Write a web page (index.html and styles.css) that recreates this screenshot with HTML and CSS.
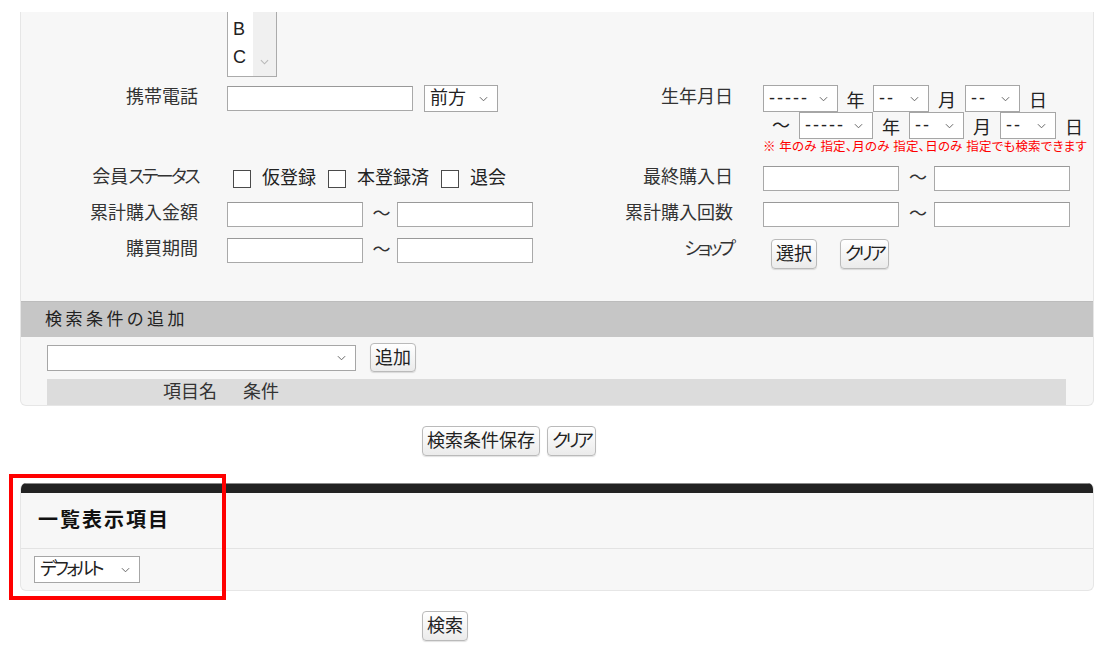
FILE: index.html
```html
<!DOCTYPE html>
<html lang="ja">
<head>
<meta charset="utf-8">
<title>検索</title>
<link rel="stylesheet" href="styles.css">
</head>
<body>
<div class="page">
  <section class="panel search">
    <div class="form">
      <div class="lbl r1"></div>
      <div class="val r1">
        <div class="listbox">
          <div class="opts"><div>B</div><div>C</div></div>
          <div class="sb"><svg viewBox="0 0 10 6" width="9" height="6"><path d="M1 1l4 4 4-4" fill="none" stroke="#b8b8b8" stroke-width="1.2"/></svg></div>
        </div>
      </div>
      <div class="lbl r1"></div>
      <div class="val r1"></div>

      <div class="lbl">携帯電話</div>
      <div class="val">
        <div class="line">
          <input class="txt w186" type="text">
          <div class="sel w74 ml11"><span>前方</span><svg viewBox="0 0 10 6" width="9" height="6"><path d="M1 1l4 4 4-4" fill="none" stroke="#666" stroke-width="1.1"/></svg></div>
        </div>
      </div>
      <div class="lbl">生年月日</div>
      <div class="val">
        <div class="line">
          <div class="sel w75"><span class="dash">-----</span><svg viewBox="0 0 10 6" width="9" height="6"><path d="M1 1l4 4 4-4" fill="none" stroke="#666" stroke-width="1.1"/></svg></div>
          <span class="unit w35">年</span>
          <div class="sel w56"><span class="dash">--</span><svg viewBox="0 0 10 6" width="9" height="6"><path d="M1 1l4 4 4-4" fill="none" stroke="#666" stroke-width="1.1"/></svg></div>
          <span class="unit">月</span>
          <div class="sel w55"><span class="dash">--</span><svg viewBox="0 0 10 6" width="9" height="6"><path d="M1 1l4 4 4-4" fill="none" stroke="#666" stroke-width="1.1"/></svg></div>
          <span class="unit">日</span>
        </div>
        <div class="line">
          <span class="unit wave">～</span>
          <div class="sel w74"><span class="dash">-----</span><svg viewBox="0 0 10 6" width="9" height="6"><path d="M1 1l4 4 4-4" fill="none" stroke="#666" stroke-width="1.1"/></svg></div>
          <span class="unit">年</span>
          <div class="sel w55"><span class="dash">--</span><svg viewBox="0 0 10 6" width="9" height="6"><path d="M1 1l4 4 4-4" fill="none" stroke="#666" stroke-width="1.1"/></svg></div>
          <span class="unit">月</span>
          <div class="sel w56"><span class="dash">--</span><svg viewBox="0 0 10 6" width="9" height="6"><path d="M1 1l4 4 4-4" fill="none" stroke="#666" stroke-width="1.1"/></svg></div>
          <span class="unit">日</span>
        </div>
        <div class="note">※ 年のみ 指定、月のみ 指定、日のみ 指定でも検索できます</div>
      </div>

      <div class="lbl">会員<span class="kana k25">ステータス</span></div>
      <div class="val">
        <div class="line checks">
          <label class="chk"><span class="box"></span><span class="ctext">仮登録</span></label>
          <label class="chk"><span class="box"></span><span class="ctext">本登録済</span></label>
          <label class="chk"><span class="box"></span><span class="ctext">退会</span></label>
        </div>
      </div>
      <div class="lbl">最終購入日</div>
      <div class="val">
        <div class="line"><input class="txt w136" type="text"><span class="tilde w35">～</span><input class="txt w136" type="text"></div>
      </div>

      <div class="lbl">累計購入金額</div>
      <div class="val">
        <div class="line"><input class="txt w136" type="text"><span class="tilde">～</span><input class="txt w136" type="text"></div>
      </div>
      <div class="lbl">累計購入回数</div>
      <div class="val">
        <div class="line"><input class="txt w136" type="text"><span class="tilde w35">～</span><input class="txt w136" type="text"></div>
      </div>

      <div class="lbl">購買期間</div>
      <div class="val">
        <div class="line"><input class="txt w136" type="text"><span class="tilde">～</span><input class="txt w136" type="text"></div>
      </div>
      <div class="lbl"><span class="kana k3">ショップ</span></div>
      <div class="val">
        <div class="shopbtns"><button class="btn" type="button">選択</button><button class="btn" type="button"><span class="kana k3">クリア</span></button></div>
      </div>
    </div>

    <div class="addhead">検索条件の追加</div>
    <div class="addbody">
      <div class="addrow">
        <div class="sel w309"><span></span><svg viewBox="0 0 10 6" width="9" height="6"><path d="M1 1l4 4 4-4" fill="none" stroke="#666" stroke-width="1.1"/></svg></div>
        <button class="btn" type="button">追加</button>
      </div>
      <div class="condhead"><span class="c1">項目名</span><span class="c2">条件</span></div>
    </div>
  </section>

  <div class="btnrow first"><button class="btn" type="button">検索条件保存</button><button class="btn" type="button"><span class="kana k3">クリア</span></button></div>

  <section class="panel list">
    <div class="bar"></div>
    <h2>一覧表示項目</h2>
    <div class="listbody">
      <div class="sel w106"><span class="kana k3">デフォルト</span><svg viewBox="0 0 10 6" width="9" height="6"><path d="M1 1l4 4 4-4" fill="none" stroke="#666" stroke-width="1.1"/></svg></div>
    </div>
  </section>

  <div class="btnrow second"><button class="btn" type="button">検索</button></div>

  <div class="highlight"></div>
</div>
</body>
</html>
```

FILE: styles.css
```css
* { box-sizing: border-box; }

body {
  margin: 0;
  background: #fff;
  font-family: "Liberation Sans", "Noto Sans CJK JP", sans-serif;
  font-size: 18px;
  color: #222;
  font-feature-settings: "palt";
}

.page {
  position: relative;
  width: 1104px;
  padding: 12px 10px 20px 20px;
}

.panel {
  width: 1074px;
  background: #f7f7f7;
  border: 1px solid #e6e6e6;
}

.search {
  border-top: none;
  border-radius: 0 0 6px 6px;
  overflow: hidden;
}

.form {
  display: grid;
  grid-template-columns: 206px 330px 206px 1fr;
  padding-bottom: 27px;
}

.lbl {
  text-align: right;
  padding: 4px 29px 5px 0;
  line-height: 25px;
  color: #333;
  white-space: nowrap;
}

.lbl:nth-child(4n+3) { padding-right: 30px; }

.val { padding: 4px 0 5px; }

.lbl.r1, .val.r1 { padding: 0 0 4px; }

.kana { font-feature-settings: "palt"; }
.k25 { letter-spacing: -2.5px; }
.k3 { letter-spacing: -3px; }

.listbox {
  display: flex;
  width: 50px;
  height: 65px;
  background: #fff;
  border: 1px solid #ababab;
  border-top: none;
}

.opts {
  flex: 1;
  padding: 3px 0 0 5px;
  line-height: 28px;
  font-size: 18px;
  color: #222;
}

.sb {
  width: 23px;
  background: #f0f0f0;
  display: flex;
  flex-direction: column;
  justify-content: flex-end;
  align-items: center;
  padding-bottom: 11px;
}

.line {
  display: flex;
  align-items: center;
  height: 27px;
}

.txt {
  height: 25px;
  border: 1px solid #a9a9a9;
  border-top-color: #999;
  background: #fff;
  padding: 0 4px;
  font: inherit;
  margin: 0;
}

.w186 { width: 186px; }
.w136 { width: 136px; }

.sel {
  display: inline-flex;
  align-items: center;
  justify-content: space-between;
  height: 27px;
  background: #fff;
  border: 1px solid #a6a6a6;
  padding: 0 9px 0 5px;
  color: #222;
  line-height: 25px;
  flex: none;
}

.sel svg { flex: none; }

.w74 { width: 74px; }
.w75 { width: 75px; }
.w56 { width: 56px; }
.w55 { width: 55px; }
.w106 { width: 106px; }
.w309 { width: 309px; }
.ml11 { margin-left: 11px; }

.dash { letter-spacing: 2px; }

.unit {
  width: 36px;
  text-align: center;
  flex: none;
  color: #222;
}

.unit.w35 { width: 35px; }
.unit.wave { padding-bottom: 3px; }

.note {
  color: #ff0000;
  font-size: 12.5px;
  line-height: 17px;
  white-space: nowrap;
  letter-spacing: 0.2px;
}

.checks { padding-left: 6px; }

.chk {
  display: inline-flex;
  align-items: center;
  margin-right: 12px;
  color: #222;
}

.ctext { padding-bottom: 6px; }

.box {
  width: 18px;
  height: 18px;
  border: 1px solid #4a4a4a;
  background: #fff;
  margin-right: 11px;
}

.tilde {
  width: 34px;
  text-align: center;
  padding-left: 3px;
  padding-bottom: 6px;
  color: #333;
  flex: none;
}

.tilde.w35 { width: 35px; }

.btn {
  font: inherit;
  font-size: 18px;
  font-feature-settings: "palt";
  height: 30px;
  padding: 0 4px;
  border: 1px solid #bababa;
  border-radius: 4px;
  background: linear-gradient(#ffffff, #ebebeb);
  color: #222;
  line-height: 26px;
  box-shadow: 0 1px 1px rgba(0, 0, 0, 0.12);
  margin: 0;
}

.shopbtns {
  display: flex;
  gap: 23px;
  padding: 2px 0 0 8px;
}

.addhead {
  height: 36px;
  line-height: 35px;
  background: #c6c6c6;
  border-top: 1px solid #bcbcbc;
  padding-left: 24px;
  font-size: 17px;
  letter-spacing: 3.5px;
  color: #222;
}

.addbody {
  padding: 6px 27px 0 26px;
}

.addrow {
  display: flex;
  align-items: center;
  gap: 14px;
  height: 29px;
}

.addrow .sel { height: 26px; }
.addrow .btn { height: 29px; }

.condhead {
  margin-top: 7px;
  height: 26px;
  line-height: 26px;
  background: #dcdcdc;
  color: #333;
  display: flex;
}

.c1 { margin-left: 116px; }
.c2 { margin-left: 26px; }

.btnrow {
  display: flex;
  gap: 7px;
  margin-left: 402px;
}

.btnrow.first { margin-top: 20px; }
.btnrow.second { margin-top: 20px; }

.list {
  margin-top: 27px;
  border-top: none;
  border-radius: 6px;
  overflow: hidden;
}

.bar {
  height: 10px;
  background: #222;
  border-top: 1px solid #8a8a8a;
}

.list h2 {
  margin: 0;
  height: 56px;
  line-height: 54px;
  padding-left: 17px;
  font-size: 20px;
  font-weight: bold;
  letter-spacing: 2px;
  color: #111;
  border-bottom: 1px solid #e3e3e3;
}

.listbody { padding: 7px 13px 7px; }

.highlight {
  position: absolute;
  left: 9px;
  top: 474px;
  width: 217px;
  height: 126px;
  border: 4px solid #ff0000;
  pointer-events: none;
}
```
